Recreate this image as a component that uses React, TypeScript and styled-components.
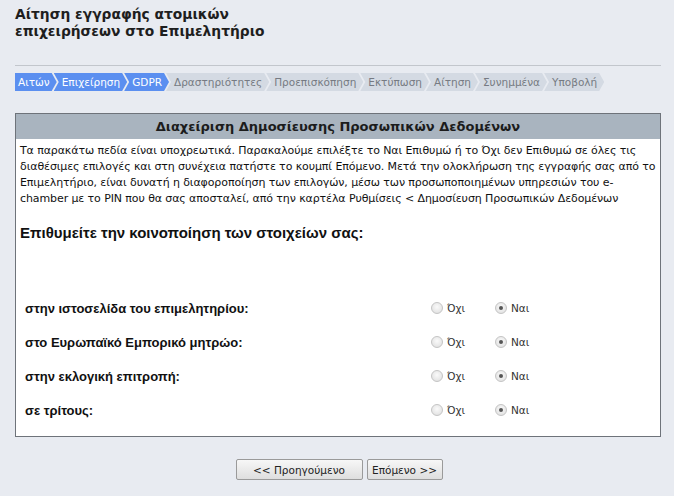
import styled, { createGlobalStyle } from "styled-components";

const GlobalStyle = createGlobalStyle`
  body {
    margin: 0;
    background: #e8ebf1;
    font-family: "DejaVu Sans", Verdana, sans-serif;
    color: #222;
  }
`;

const Page = styled.div`
  padding: 0 13px 0 15px;
`;

const Title = styled.h1`
  margin: 0;
  padding-top: 6px;
  font-size: 13.8px;
  line-height: 17px;
  font-weight: bold;
  color: #1e1e1e;
`;

const Rule = styled.hr`
  margin: 25px 0 0;
  border: 0;
  border-top: 1px solid #c2c6cc;
`;

const Steps = styled.div`
  display: flex;
  margin-top: 7px;
  height: 18px;
`;

const Step = styled.div<{ $active?: boolean; $first?: boolean }>`
  display: flex;
  align-items: center;
  height: 18px;
  padding: 0 7px 0 ${(p) => (p.$first ? "3px" : "8px")};
  margin-left: ${(p) => (p.$first ? "0" : "-3px")};
  font-size: 10.5px;
  background: ${(p) => (p.$active ? "#5b8ff0" : "#d4dae3")};
  color: ${(p) => (p.$active ? "#fff" : "#767a82")};
  clip-path: ${(p) =>
    p.$first
      ? "polygon(0 0, calc(100% - 5px) 0, 100% 50%, calc(100% - 5px) 100%, 0 100%)"
      : "polygon(0 0, calc(100% - 5px) 0, 100% 50%, calc(100% - 5px) 100%, 0 100%, 5px 50%)"};
`;

const Panel = styled.div`
  margin-top: 22px;
  border: 1px solid #6e737a;
  background: #fff;
  padding-bottom: 16px;
`;

const PanelHead = styled.div`
  height: 25px;
  line-height: 25px;
  background: #a9b4bf;
  text-align: center;
  font-size: 13px;
  font-weight: bold;
  color: #1c1c1c;
`;

const Intro = styled.p`
  margin: 4px 2px 0 4px;
  font-size: 11px;
  letter-spacing: -0.1px;
  line-height: 16px;
  color: #111;
`;

const Question = styled.h2`
  margin: 17px 0 0 4px;
  font-family: "Liberation Sans", Arial, sans-serif;
  font-size: 15px;
  font-weight: bold;
  color: #111;
`;

const Rows = styled.div`
  margin-top: 57px;
  display: flex;
  flex-direction: column;
  gap: 14px;
`;

const Row = styled.div`
  display: grid;
  grid-template-columns: 406px 64px 1fr;
  align-items: center;
  height: 20px;
  padding-left: 9px;
`;

const Label = styled.span`
  font-family: "Liberation Sans", Arial, sans-serif;
  font-size: 13px;
  font-weight: bold;
  color: #111;
`;

const Choice = styled.label`
  display: flex;
  align-items: center;
  gap: 4px;
  font-size: 10.5px;
  color: #333;
`;

const Radio = styled.span<{ $on?: boolean }>`
  width: 12px;
  height: 12px;
  border-radius: 50%;
  box-sizing: border-box;
  border: 1px solid #c4c4c4;
  background: radial-gradient(circle at 50% 40%, #fafafa, #dcdcdc);
  position: relative;
  &::after {
    content: "";
    display: ${(p) => (p.$on ? "block" : "none")};
    position: absolute;
    left: 3px;
    top: 3px;
    width: 4px;
    height: 4px;
    border-radius: 50%;
    background: #555;
  }
`;

const Actions = styled.div`
  display: flex;
  justify-content: center;
  gap: 4px;
  margin-top: 22px;
  padding-left: 2px;
`;

const Button = styled.button<{ $w: number }>`
  width: ${(p) => p.$w}px;
  height: 21px;
  padding: 0;
  font-family: "DejaVu Sans", Verdana, sans-serif;
  font-size: 10.5px;
  color: #222;
  border: 1px solid #9a9a9a;
  border-radius: 2px;
  background: linear-gradient(#f7f7f7, #dedede);
`;

const steps = [
  "Αιτών",
  "Επιχείρηση",
  "GDPR",
  "Δραστηριότητες",
  "Προεπισκόπηση",
  "Εκτύπωση",
  "Αίτηση",
  "Συνημμένα",
  "Υποβολή",
];

const rows = [
  "στην ιστοσελίδα του επιμελητηρίου:",
  "στο Ευρωπαϊκό Εμπορικό μητρώο:",
  "στην εκλογική επιτροπή:",
  "σε τρίτους:",
];

export default function App() {
  return (
    <>
      <GlobalStyle />
      <Page>
        <Title>
          Αίτηση εγγραφής ατομικών
          <br />
          επιχειρήσεων στο Επιμελητήριο
        </Title>
        <Rule />
        <Steps>
          {steps.map((s, i) => (
            <Step key={s} $active={i < 3} $first={i === 0}>
              {s}
            </Step>
          ))}
        </Steps>
        <Panel>
          <PanelHead>Διαχείριση Δημοσίευσης Προσωπικών Δεδομένων</PanelHead>
          <Intro>
            Τα παρακάτω πεδία είναι υποχρεωτικά. Παρακαλούμε επιλέξτε το Ναι
            Επιθυμώ ή το Όχι δεν Επιθυμώ σε όλες τις
            <br />
            διαθέσιμες επιλογές και στη συνέχεια πατήστε το κουμπί Επόμενο.
            Μετά την ολοκλήρωση της εγγραφής σας από το
            <br />
            Επιμελητήριο, είναι δυνατή η διαφοροποίηση των επιλογών, μέσω των
            προσωποποιημένων υπηρεσιών του e-
            <br />
            chamber με το PIN που θα σας αποσταλεί, από την καρτέλα Ρυθμίσεις
            &lt; Δημοσίευση Προσωπικών Δεδομένων
          </Intro>
          <Question>Επιθυμείτε την κοινοποίηση των στοιχείων σας:</Question>
          <Rows>
            {rows.map((r) => (
              <Row key={r}>
                <Label>{r}</Label>
                <Choice>
                  <Radio />
                  Όχι
                </Choice>
                <Choice>
                  <Radio $on />
                  Ναι
                </Choice>
              </Row>
            ))}
          </Rows>
        </Panel>
        <Actions>
          <Button $w={127}>&lt;&lt; Προηγούμενο</Button>
          <Button $w={76}>Επόμενο &gt;&gt;</Button>
        </Actions>
      </Page>
    </>
  );
}
